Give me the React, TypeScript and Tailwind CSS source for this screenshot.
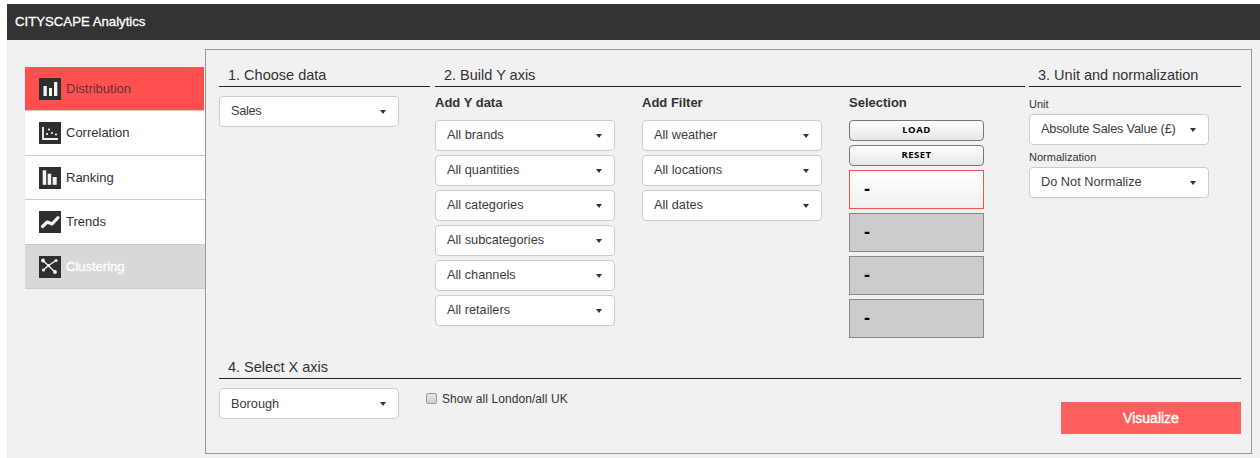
import React from 'react';

const FONT = "font-['Helvetica_Neue','Liberation_Sans',Arial,sans-serif]";

const BarsIcon = () => (
    <svg viewBox="0 0 22 22" className="w-[22px] h-[22px] block">
        <rect width="22" height="22" fill="#2f2f2f" />
        <rect x="4.5" y="8" width="3.3" height="10" fill="#f4f4f4" />
        <rect x="10" y="10" width="3" height="8" fill="#f4f4f4" />
        <rect x="15" y="4" width="3.3" height="14" fill="#f4f4f4" />
    </svg>
);

const ScatterIcon = () => (
    <svg viewBox="0 0 22 22" className="w-[22px] h-[22px] block">
        <rect width="22" height="22" fill="#2f2f2f" />
        <path d="M4 5v12h15" fill="none" stroke="#f4f4f4" strokeWidth="1.8" />
        <circle cx="10" cy="7.5" r="1.1" fill="#f4f4f4" />
        <circle cx="8" cy="12" r="1.1" fill="#f4f4f4" />
        <circle cx="13" cy="11" r="1.1" fill="#f4f4f4" />
        <circle cx="17" cy="12.5" r="1.1" fill="#f4f4f4" />
    </svg>
);

const RankIcon = () => (
    <svg viewBox="0 0 22 22" className="w-[22px] h-[22px] block">
        <rect width="22" height="22" fill="#2f2f2f" />
        <rect x="3.7" y="3.3" width="3.5" height="14.5" fill="#f4f4f4" />
        <rect x="8.7" y="6.7" width="3.5" height="11.1" fill="#f4f4f4" />
        <rect x="13.7" y="10" width="4" height="7.8" fill="#f4f4f4" />
    </svg>
);

const TrendIcon = () => (
    <svg viewBox="0 0 22 22" className="w-[22px] h-[22px] block">
        <rect width="22" height="22" fill="#2f2f2f" />
        <path d="M3.5 15.5 8.3 11 13 13 19 6.7" fill="none" stroke="#f4f4f4" strokeWidth="3.2" strokeLinejoin="round" strokeLinecap="round" />
    </svg>
);

const ClusterIcon = () => (
    <svg viewBox="0 0 22 22" className="w-[22px] h-[22px] block">
        <rect width="22" height="22" fill="#2f2f2f" />
        <path d="M4 4.5 16 16M4.5 14 9.5 9.5M9.5 9.5 17 4.5" fill="none" stroke="#f4f4f4" strokeWidth="1.4" />
        <circle cx="4" cy="4.5" r="1.9" fill="#f4f4f4" />
        <circle cx="16" cy="16" r="1.9" fill="#f4f4f4" />
        <circle cx="4.5" cy="14" r="1.6" fill="#f4f4f4" />
        <circle cx="17" cy="4.5" r="1.6" fill="#f4f4f4" />
        <circle cx="9.5" cy="9.5" r="1.5" fill="#f4f4f4" />
    </svg>
);

const navItems = [
    { label: 'Distribution', icon: <BarsIcon />, cls: 'w-[179px] bg-[#ff5050] text-[#5f3434] h-[44px]' },
    { label: 'Correlation', icon: <ScatterIcon />, cls: 'bg-white text-[#333333] h-[45px]' },
    { label: 'Ranking', icon: <RankIcon />, cls: 'bg-white text-[#333333] h-[44px]' },
    { label: 'Trends', icon: <TrendIcon />, cls: 'bg-white text-[#333333] h-[45px]' },
    { label: 'Clustering', icon: <ClusterIcon />, cls: 'bg-[#d8d8d8] text-white h-[44px] [-webkit-text-stroke:0.3px_white]' },
];

const Select = ({ label, textCls = 'pb-[2px]' }: { label: string; textCls?: string }) => (
    <div className="w-[180px] h-[31px] shrink-0 bg-white border border-[#cccccc] rounded-[4px] pl-[11px] pr-[12px] flex items-center justify-between text-[12.75px] text-[#3c3c3c]">
        <span className={textCls}>{label}</span>
        <span className="w-0 h-0 border-t-[4px] border-t-[#333333] border-x-[3px] border-x-transparent" />
    </div>
);

const Heading = ({ children, className }: { children: React.ReactNode; className: string }) => (
    <div className={`${className} h-[23px] border-b border-[#222222] pl-[9px] text-[14.5px] leading-[22px] text-[#333333]`}>
        {children}
    </div>
);

const SlotBox = ({ active }: { active?: boolean }) => (
    <div
        className={`h-[39px] box-border pl-[14px] flex items-center text-[18px] font-bold text-black ${
            active
                ? 'border border-solid border-[#ff4f4f] bg-[linear-gradient(#ffffff,#f0f0f0)]'
                : 'border border-solid border-[#888888] bg-[#cccccc]'
        }`}
    >
        -
    </div>
);

const MiniButton = ({ label }: { label: string }) => (
    <button className="h-[21px] w-full rounded-[4px] border border-[#777777] bg-gradient-to-b from-white to-[#e6e6e6] text-[9.5px] font-bold tracking-[0.5px] text-black font-['Open_Sans',sans-serif]">
        {label}
    </button>
);

export default function App() {
    return (
        <div className={`${FONT} w-[1260px] h-[458px] overflow-hidden bg-white pt-[4px] pl-[7px]`}>
            <div className="h-[36px] bg-[#333333] flex items-center pl-[8px] text-[13.2px] text-white [-webkit-text-stroke:0.3px_white]">
                CITYSCAPE Analytics
            </div>
            <div className="h-[418px] bg-[#f1f1f1] flex pl-[18px] pt-[9px]">
                {/* side menu */}
                <div className="w-[180px] mt-[18px] flex flex-col text-[13px]">
                    {navItems.map((item) => (
                        <div key={item.label} className={`${item.cls} border-b border-[#cccccc] pl-[14px] flex items-center gap-[5px]`}>
                            {item.icon}
                            <span>{item.label}</span>
                        </div>
                    ))}
                </div>

                {/* main panel */}
                <div className="w-[1047px] h-[405px] border border-[#999999] pl-[13px] pr-[10px] pt-[14px] flex flex-col">
                    <div className="flex gap-[5px]">
                        <div className="w-[211px] shrink-0">
                            <Heading className="w-full">1. Choose data</Heading>
                            <div className="mt-[9px]">
                                <Select label="Sales" textCls="pb-[2px] tracking-[-0.3px]" />
                            </div>
                        </div>

                        <div className="w-[590px] shrink-0">
                            <Heading className="w-full">2. Build Y axis</Heading>
                            <div className="flex gap-[27px] mt-[7px]">
                                <div className="w-[180px]">
                                    <div className="h-[18px] text-[13px] leading-[18px] font-bold text-[#333333] mb-[8px]">Add Y data</div>
                                    <div className="flex flex-col gap-[4px]">
                                        <Select label="All brands" />
                                        <Select label="All quantities" />
                                        <Select label="All categories" />
                                        <Select label="All subcategories" />
                                        <Select label="All channels" />
                                        <Select label="All retailers" />
                                    </div>
                                </div>
                                <div className="w-[180px]">
                                    <div className="h-[18px] text-[13px] leading-[18px] font-bold text-[#333333] mb-[8px]">Add Filter</div>
                                    <div className="flex flex-col gap-[4px]">
                                        <Select label="All weather" />
                                        <Select label="All locations" />
                                        <Select label="All dates" />
                                    </div>
                                </div>
                                <div className="w-[135px]">
                                    <div className="h-[18px] text-[13px] leading-[18px] font-bold text-[#333333] mb-[8px]">Selection</div>
                                    <div className="flex flex-col gap-[4px]">
                                        <MiniButton label="LOAD" />
                                        <MiniButton label="RESET" />
                                        <SlotBox active />
                                        <SlotBox />
                                        <SlotBox />
                                        <SlotBox />
                                    </div>
                                </div>
                            </div>
                        </div>

                        <div className="w-[212px] ml-[-1px] shrink-0">
                            <Heading className="w-full">3. Unit and normalization</Heading>
                            <div className="mt-[9px] text-[11px] leading-[16px] h-[18px] text-[#333333]">Unit</div>
                            <Select label="Absolute Sales Value (£)" textCls="pb-[2px] tracking-[-0.2px]" />
                            <div className="mt-[4px] text-[11px] leading-[16px] h-[18px] text-[#333333]">Normalization</div>
                            <Select label="Do Not Normalize" />
                        </div>
                    </div>

                    <Heading className="w-full mt-[18px]">4. Select X axis</Heading>
                    <div className="flex mt-[9px]">
                        <Select label="Borough" textCls="" />
                        <label className="ml-[27px] mt-[3px] h-[14px] flex items-center gap-[5px] text-[12px] tracking-[0.08px] text-[#333333]">
                            <span className="w-[11px] h-[11px] rounded-[2px] border border-[#999999] bg-gradient-to-b from-[#e4e4e4] to-[#d0d0d0]" />
                            <span className="pt-[2px]">Show all London/all UK</span>
                        </label>
                        <button className="ml-auto mt-[14px] w-[180px] h-[32px] bg-[#ff5f5f] text-white text-[14px] [-webkit-text-stroke:0.4px_white]">
                            Visualize
                        </button>
                    </div>
                </div>
            </div>
        </div>
    );
}
